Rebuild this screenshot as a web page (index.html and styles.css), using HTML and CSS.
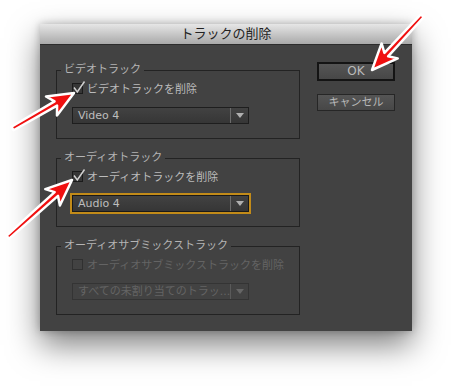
FILE: index.html
```html
<!DOCTYPE html>
<html>
<head>
    <meta charset="utf-8">
    <link rel="stylesheet" href="styles.css">
    <title>トラックの削除</title>
</head>
<body>
    <div class="dialog">
        <div class="titlebar">トラックの削除</div>
        <div class="content">
            <div class="groups">
                <fieldset class="group">
                    <legend>ビデオトラック</legend>
                    <div class="inner">
                        <div class="check">
                            <span class="box"><svg viewBox="0 0 14 14"><path d="M2 7.5 L5.3 12 L12.5 1.5" /></svg></span>
                            ビデオトラックを削除
                        </div>
                        <div class="select">
                            <span class="value">Video 4</span>
                            <span class="arrow"></span>
                        </div>
                    </div>
                </fieldset>
                <fieldset class="group">
                    <legend>オーディオトラック</legend>
                    <div class="inner">
                        <div class="check">
                            <span class="box"><svg viewBox="0 0 14 14"><path d="M2 7.5 L5.3 12 L12.5 1.5" /></svg></span>
                            オーディオトラックを削除
                        </div>
                        <div class="select focus">
                            <span class="value">Audio 4</span>
                            <span class="arrow"></span>
                        </div>
                    </div>
                </fieldset>
                <fieldset class="group">
                    <legend>オーディオサブミックストラック</legend>
                    <div class="inner disabled">
                        <div class="check">
                            <span class="box"></span>
                            オーディオサブミックストラックを削除
                        </div>
                        <div class="select">
                            <span class="value">すべての未割り当てのトラッ...</span>
                            <span class="arrow"></span>
                        </div>
                    </div>
                </fieldset>
            </div>
            <div class="buttons">
                <div class="btn default">OK</div>
                <div class="btn">キャンセル</div>
            </div>
        </div>
    </div>

    <!-- red callout arrows drawn over the screenshot -->
    <svg class="arrows" width="451" height="386">
        <g transform="translate(74 93) rotate(-30)">
            <polygon points="0,0 -26,-11 -21,-2.5 -71,-2 -71,2 -21,2.5 -26,11" />
        </g>
        <g transform="translate(72 180) rotate(-41.7)">
            <polygon points="0,0 -26,-11 -21,-2.5 -86,-2 -86,2 -21,2.5 -26,11" />
        </g>
        <g transform="translate(372 70) rotate(132.8)">
            <polygon points="0,0 -26,-11 -21,-2.5 -74,-2 -74,2 -21,2.5 -26,11" />
        </g>
    </svg>
</body>
</html>
```

FILE: styles.css
```css
body {
    margin: 0;
    width: 451px;
    height: 386px;
    overflow: hidden;
    position: relative;
    background: #fff;
    font-family: "DejaVu Sans", "Noto Sans CJK JP", sans-serif;
}

.dialog {
    margin: 24px 0 0 40px;
    width: 372px;
    height: 307px;
    background: #424242;
    box-shadow: 0 14px 30px rgba(0, 0, 0, 0.5), 0 0 8px rgba(0, 0, 0, 0.25);
}

.titlebar {
    box-sizing: border-box;
    height: 21px;
    line-height: 20px;
    text-align: center;
    font-size: 13px;
    color: #222;
    background: linear-gradient(#e6e6e6, #a9a9a9);
    border-bottom: 1px solid #2c2c2c;
}

.content {
    display: flex;
    padding: 18px 17px 0 16px;
}

.groups {
    width: 244px;
}

.group {
    box-sizing: border-box;
    width: 244px;
    margin: 0 0 12px 0;
    padding: 0 0 14px 0;
    border: 1px solid #232323;
    min-width: 0;
}

.group legend {
    margin-left: 4px;
    padding: 0 3px;
    font-size: 11px;
    line-height: 14px;
    color: #b4b4b4;
}

.inner {
    padding-left: 15px;
}

.check {
    display: flex;
    align-items: center;
    height: 14px;
    margin-top: 4px;
    font-size: 11px;
    color: #bcbcbc;
}

.box {
    position: relative;
    box-sizing: border-box;
    width: 11px;
    height: 11px;
    margin-right: 4px;
    border: 1px solid #1b1b1b;
    background: #363636;
}

.box svg {
    position: absolute;
    left: -1px;
    top: -4px;
    width: 14px;
    height: 14px;
    overflow: visible;
}

.box path {
    fill: none;
    stroke: #d0d0d0;
    stroke-width: 1.5;
}

.select {
    box-sizing: border-box;
    display: flex;
    width: 177px;
    height: 17px;
    margin-top: 12px;
    border: 1px solid #1e1e1e;
    background: linear-gradient(#424242, #363636);
}

.select .value {
    flex: 1;
    padding-left: 5px;
    font-size: 11px;
    line-height: 15px;
    color: #bdbdbd;
    white-space: nowrap;
    overflow: hidden;
}

.select .arrow {
    width: 17px;
    border-left: 1px solid #6c6c6c;
    display: flex;
    align-items: center;
    justify-content: center;
}

.select .arrow::after {
    content: '';
    border-left: 4px solid transparent;
    border-right: 4px solid transparent;
    border-top: 5px solid #b0b0b0;
}

.select.focus {
    border-color: #1a1a1a;
    box-shadow: 0 0 0 2px #c28b19;
}

.disabled .check {
    color: #646464;
}

.disabled .box {
    border-color: #303030;
    background: #424242;
}

.disabled .select {
    border-color: #343434;
    background: #424242;
}

.disabled .select .value {
    color: #646464;
}

.disabled .select .arrow {
    border-left-color: #5a5a5a;
}

.disabled .select .arrow::after {
    border-top-color: #666;
}

.buttons {
    width: 78px;
    margin-left: 17px;
    margin-top: -1px;
}

.btn {
    box-sizing: border-box;
    height: 17px;
    line-height: 15px;
    margin-top: 13px;
    text-align: center;
    font-size: 11px;
    color: #b8b8b8;
    border: 1px solid #262626;
    background: linear-gradient(#555, #474747);
}

.btn.default {
    height: 19px;
    margin-top: 0;
    border: 2px solid #141414;
    font-size: 12px;
    color: #bababa;
}

.arrows {
    position: absolute;
    top: 0;
    left: 0;
    pointer-events: none;
}

.arrows polygon {
    fill: #f01010;
    stroke: #fff;
    stroke-width: 2.5;
    stroke-linejoin: round;
}
```
